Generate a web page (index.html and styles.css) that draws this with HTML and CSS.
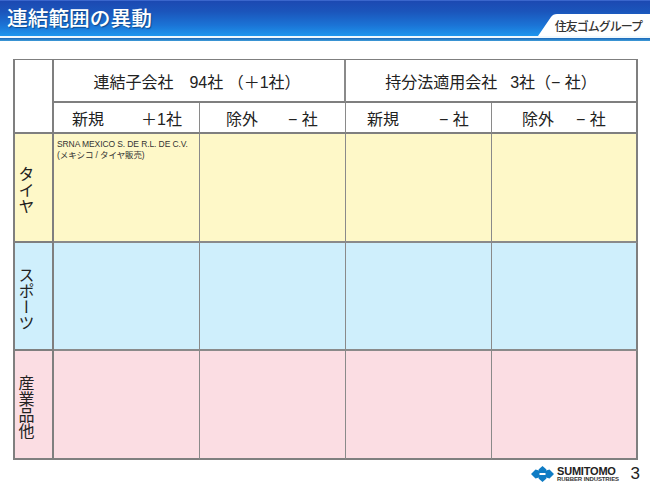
FILE: index.html
```html
<!DOCTYPE html>
<html lang="ja">
<head>
<meta charset="utf-8">
<title>連結範囲の異動</title>
<link rel="stylesheet" href="styles.css">
</head>
<body>
<div class="slide">
  <header class="banner">
    <div class="banner-main">
      <h1 class="title">連結範囲の異動</h1>
      <div class="group-tab">
        <svg class="tab-shape" width="112" height="22" viewBox="0 0 112 22" aria-hidden="true"><path d="M0 22 L13 3 Q15 0 19 0 L112 0 L112 22 Z" fill="#fff"/></svg>
        <span class="group-name">住友ゴムグループ</span>
      </div>
    </div>
    <div class="banner-gap"></div>
    <div class="banner-rule"></div>
  </header>
  <main class="table">
    <div class="cell corner"></div>
    <div class="cell head head-left span2"><span>連結子会社　94社 （＋1社）</span></div>
    <div class="cell head span2 last"><span>持分法適用会社<span class="num-gap">3</span>社（− 社）</span></div>
    <div class="cell sub sub-a"><span>新規</span><span>＋1社</span></div>
    <div class="cell sub sub-b"><span>除外</span><span>− 社</span></div>
    <div class="cell sub sub-c"><span>新規</span><span>− 社</span></div>
    <div class="cell sub sub-d last"><span>除外</span><span>− 社</span></div>

    <div class="cell label yellow"><span class="vert">タイヤ</span></div>
    <div class="cell body yellow"><p class="note">SRNA MEXICO S. DE R.L. DE C.V.<br>(メキシコ / タイヤ販売)</p></div>
    <div class="cell body yellow"></div>
    <div class="cell body yellow"></div>
    <div class="cell body yellow last"></div>

    <div class="cell label blue"><span class="vert">スポーツ</span></div>
    <div class="cell body blue"></div>
    <div class="cell body blue"></div>
    <div class="cell body blue"></div>
    <div class="cell body blue last"></div>

    <div class="cell label pink bottom"><span class="vert">産業品他</span></div>
    <div class="cell body pink bottom"></div>
    <div class="cell body pink bottom"></div>
    <div class="cell body pink bottom"></div>
    <div class="cell body pink bottom last"></div>
  </main>
  <footer class="footer">
    <svg class="logo-mark" width="23" height="16" viewBox="0 0 23 16" aria-hidden="true">
      <path d="M11.500 0 L15.500 3.600 L15 4.600 L18.500 3.500 L23 8 L18.500 12.500 L15 11.400 L15.500 12.400 L11.500 16 L7.500 12.400 L8 11.400 L4.500 12.500 L0 8 L4.500 3.500 L8 4.600 L7.500 3.600 Z" fill="#0f7cc4"/>
      <rect x="8.500" y="7" width="6" height="2" fill="#fff"/>
    </svg>
    <div class="logo-text">
      <span class="logo-top">SUMITOMO</span>
      <span class="logo-bottom">RUBBER INDUSTRIES</span>
    </div>
    <span class="page-no">3</span>
  </footer>
</div>
</body>
</html>
```
FILE: styles.css
```css
* { box-sizing: border-box; }
html, body { margin: 0; padding: 0; background: #fff; }
body { font-family: "Liberation Sans", "Noto Sans CJK JP", sans-serif; color: #222; }
.slide { width: 650px; height: 488px; overflow: hidden; display: flex; flex-direction: column; }

.banner { height: 42px; flex: none; display: flex; flex-direction: column; }
.banner-main {
  height: 36px;
  display: flex;
  justify-content: space-between;
  align-items: flex-end;
  background: linear-gradient(#1c49b2 0%, #1b55bb 30%, #1b74d6 70%, #1d96ee 100%);
  border-top: 1px solid #3a66cc;
}
.banner-gap { height: 2px; background: #f0f9fe; }
.banner-rule { height: 3px; background: linear-gradient(#1a67b8, #3f9bd8); }
.title {
  margin: 0 0 6px 7px;
  font-size: 20.700px;
  line-height: 26px;
  font-weight: 500;
  color: #fff;
  font-family: "Noto Sans CJK JP", sans-serif;
  text-shadow: 1px 1px 1px #0e4a8c;
}
.group-tab { position: relative; width: 112px; height: 22px; display: flex; align-items: center; justify-content: flex-end; }
.tab-shape { position: absolute; left: 0; top: 0; }
.group-name {
  position: relative;
  padding-right: 8px;
  font-size: 12px;
  font-weight: 500;
  color: #333;
  letter-spacing: -1px;
  font-family: "Noto Sans CJK JP", sans-serif;
}

.table {
  margin: 17px 0 0 13px;
  width: 625px;
  height: 401px;
  flex: none;
  display: grid;
  grid-template-columns: 39px 146px 146px 146px 146px;
  grid-template-rows: 43px 31px 109px 108px 109px;
  border-top: 1px solid #7f7f7f;
  border-left: 2px solid #7f7f7f;
}
.cell { border-right: 1px solid #8a8a8a; border-bottom: 1px solid #8a8a8a; min-width: 0; }
.cell.last { border-right: 2px solid #7f7f7f; }
.cell.bottom { border-bottom: 2px solid #7f7f7f; }
.corner { grid-row: span 2; border-right: 2px solid #7f7f7f; border-bottom: 2px solid #7f7f7f; }
.head {
  display: flex;
  align-items: center;
  justify-content: center;
  font-size: 16px;
  border-bottom: 2px solid #7f7f7f;
  border-right-width: 2px;
}
.head-left { padding-right: 4px; }
.span2 { grid-column: span 2; }
.num-gap { margin-left: 13px; }
.sub {
  display: flex;
  align-items: center;
  font-size: 16px;
  border-bottom: 2px solid #7f7f7f;
}
.sub-a { padding-left: 18px; gap: 37px; }
.sub-b { padding-left: 26px; gap: 30px; }
.sub-c { padding-left: 21px; gap: 40px; }
.sub-d { padding-left: 30px; gap: 22px; }
.label { display: flex; align-items: center; justify-content: center; padding: 5px 14px 0 0; border-right: 2px solid #7f7f7f; border-bottom: 2px solid #7f7f7f; }
.vert {
  writing-mode: vertical-rl;
  font-family: "Noto Sans CJK JP", sans-serif;
  font-size: 16px;
  line-height: 1;
  color: #222;
}
.yellow { background: #fef8c8; }
.blue { background: #cfeffc; }
.pink { background: #fbdde3; }
.body.yellow, .label.yellow, .body.blue, .label.blue { border-bottom-width: 2px; }
.note {
  margin: 5px 0 0 3px;
  font-size: 8.500px;
  line-height: 11px;
  letter-spacing: -0.1px;
  white-space: nowrap;
  color: #333;
}

.footer { flex: 1; display: flex; align-items: center; padding: 0 10px 0 531px; }
.logo-mark { flex: none; }
.logo-text { display: flex; flex-direction: column; margin-left: 3px; width: 63px; }
.logo-top { font-size: 11px; line-height: 10px; font-weight: 700; color: #222; letter-spacing: -0.2px; }
.logo-bottom { font-size: 6px; line-height: 7px; font-weight: 700; color: #333; white-space: nowrap; letter-spacing: -0.1px; }
.page-no { margin-left: auto; font-size: 17px; line-height: 16px; color: #222; }
```
